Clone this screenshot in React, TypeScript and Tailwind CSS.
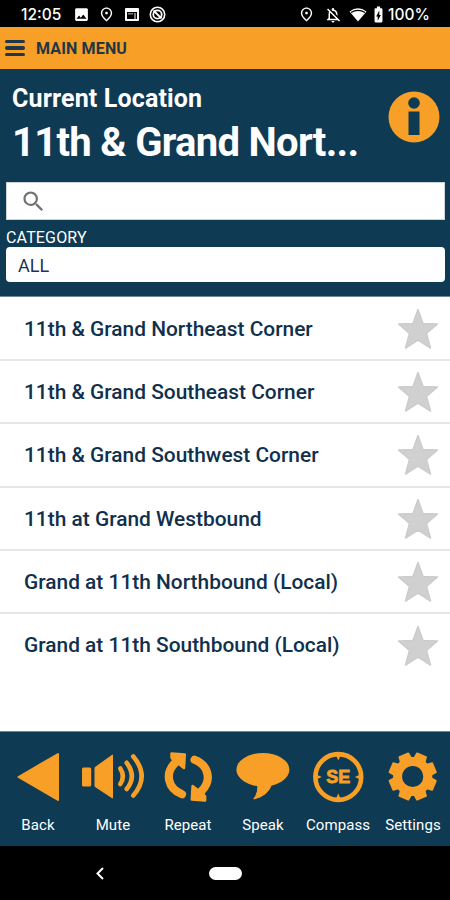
import React from 'react'
import { MdImage, MdOutlineNotificationsOff, MdOutlinePlace, MdBatteryChargingFull, MdSearch } from 'react-icons/md'

type Tab = {
  label: string
  icon: React.ReactNode
}

const stops = [
  '11th & Grand Northeast Corner',
  '11th & Grand Southeast Corner',
  '11th & Grand Southwest Corner',
  '11th at Grand Westbound',
  'Grand at 11th Northbound (Local)',
  'Grand at 11th Southbound (Local)',
]

const teeth = [22.5, 67.5, 112.5, 157.5, 202.5, 247.5, 292.5, 337.5]

const tabs: Tab[] = [
  {
    label: 'Back',
    icon: <path d="M18.5 29 58 6V52Z" fill="currentColor" stroke="currentColor" strokeWidth="2" strokeLinejoin="round" />,
  },
  {
    label: 'Mute',
    icon: (
      <>
        <rect x="7" y="19.5" width="9.2" height="19" rx="1.5" fill="currentColor" />
        <path d="M20 19.5 37.5 7V50L20 38.5Z" fill="currentColor" stroke="currentColor" strokeLinejoin="round" />
        <g fill="none" stroke="currentColor" strokeWidth="4.6" strokeLinecap="round">
          <path d="M45.3 20.5Q50.5 28.5 45.3 36" />
          <path d="M51.7 14.8Q62 28.5 51.7 41" />
          <path d="M58.3 8.5Q75 28.5 58.3 47.5" />
        </g>
      </>
    ),
  },
  {
    label: 'Repeat',
    icon: [0, 180].map((angle) => (
      <g key={angle} transform={`rotate(${angle} 38.3 29)`}>
        <path d="M32 46.2C17.5 40.500 14.500 25 25.500 14.500" fill="none" stroke="currentColor" strokeWidth="8.2" strokeLinecap="round" />
        <path d="M21.5 5.500 34.800 6.500 34 20 29.500 16.500 24.500 14 21.500 9.500Z" fill="currentColor" stroke="currentColor" strokeWidth="2.5" strokeLinejoin="round" />
      </g>
    )),
  },
  {
    label: 'Speak',
    icon: (
      <>
        <ellipse cx="37.9" cy="21.7" rx="26.5" ry="16.7" fill="currentColor" />
        <path d="M32.5 35.5Q34 44 28.8 51Q43 48 47 35.5Z" fill="currentColor" stroke="currentColor" strokeLinejoin="round" />
      </>
    ),
  },
  {
    label: 'Compass',
    icon: (
      <>
        <circle cx="38.3" cy="29" r="22.9" fill="none" stroke="currentColor" strokeWidth="4.6" />
        <path d="M36.3 8H40.3L38.3 12.500ZM36.3 50H40.3L38.3 45.500ZM17.3 27V31L21.800 29ZM59.3 27V31L54.800 29Z" fill="currentColor" />
        <text x="38.3" y="35.3" textAnchor="middle" fill="currentColor" stroke="currentColor" strokeWidth="0.8" className="font-['Liberation_Sans',sans-serif] text-[18px] font-bold">
          SE
        </text>
      </>
    ),
  },
  {
    label: 'Settings',
    icon: (
      <g transform="translate(37.7 28.5)">
        <circle r="15.1" fill="none" stroke="currentColor" strokeWidth="9" />
        {teeth.map((angle) => (
          <path key={angle} d="M-5.5 -17 -4.8 -23H4.8L5.5 -17Z" transform={`rotate(${angle})`} fill="currentColor" stroke="currentColor" strokeWidth="2" strokeLinejoin="round" />
        ))}
      </g>
    ),
  },
]

function StatusBar() {
  return (
    <div className="flex h-[27px] items-center bg-black pt-[2px] text-white">
      <span className="ml-[21px] w-[53px] font-['Inter',sans-serif] text-[15.5px] font-medium">12:05</span>
      <MdImage size={17} className="-ml-px" />
      <MdOutlinePlace size={17} className="ml-2" />
      <svg width="14" height="13" viewBox="0 0 14 13" className="ml-[10px]">
        <path fillRule="evenodd" fill="currentColor" d="M1 0H13Q14 0 14 1V12Q14 13 13 13H1Q0 13 0 12V1Q0 0 1 0ZM2 4V11H12V4Z" />
        <path fill="currentColor" opacity="0.5" d="M3 5H8V6.5H3ZM9 5H11V11H9Z" />
      </svg>
      <svg width="17" height="17" viewBox="0 0 17 17" fill="none" stroke="currentColor" className="ml-[10px]">
        <circle cx="8.5" cy="8.5" r="7.2" strokeWidth="1.6" />
        <circle cx="8.5" cy="8.5" r="4.2" strokeWidth="1.8" />
        <path d="M4.5 4.5 12.5 12.5" strokeWidth="1.8" />
      </svg>
      <MdOutlinePlace size={17} className="mr-[9px] ml-auto" />
      <MdOutlineNotificationsOff size={18} className="mr-[7px]" />
      <svg width="18" height="14" viewBox="0 0 18 14" className="mr-[2px]">
        <path d="M0.5 3.5Q9 -3 17.5 3.5L9 13.5Z" fill="currentColor" />
        <path d="M2 4.6Q9 0.2 16 4.6" fill="none" stroke="black" strokeWidth="1.2" />
      </svg>
      <MdBatteryChargingFull size={19} />
      <span className="mr-[19px] w-[43px] font-['Inter',sans-serif] text-[15.5px] font-medium">100%</span>
    </div>
  )
}

export default function App() {
  return (
    <div className="flex h-[900px] w-[450px] flex-col overflow-hidden bg-white font-['Roboto',sans-serif] text-[#11304c]">
      <StatusBar />
      <header className="flex h-[42px] items-center bg-[#f89f27] pl-[5px] text-[#203746]">
        <button aria-label="Open menu" className="flex w-5 flex-col gap-[3px]">
          <span className="h-[3.5px] rounded-full bg-current" />
          <span className="h-[3.5px] rounded-full bg-current" />
          <span className="h-[3.5px] rounded-full bg-current" />
        </button>
        <h1 className="ml-[11px] pt-px text-[16px] font-bold tracking-[0.15px]">MAIN MENU</h1>
      </header>

      <section className="flex h-[228px] flex-col border-b border-[#73879a] bg-[#0f3a54] pr-[5px] pl-[6px] text-white">
        <div className="flex h-[113px] justify-between">
          <div className="pt-[14px] pl-[6px]">
            <p className="text-[25px] leading-[32px] font-bold tracking-[0.15px]">Current Location</p>
            <h2 className="text-[40px] leading-[56px] font-bold tracking-[-0.7px] whitespace-nowrap">11th &amp; Grand Nort...</h2>
          </div>
          <svg width="52" height="52" viewBox="0 0 52 52" className="mt-[21.5px] mr-[5px] shrink-0">
            <circle cx="26" cy="26" r="25.5" fill="#f89f27" />
            <circle cx="26" cy="12" r="5.8" fill="#0f3a54" />
            <path d="M20.5 20.5H31.5V44H20.5Z" fill="#0f3a54" />
          </svg>
        </div>
        <div className="flex h-[38px] items-center border border-[#cdd3d8] bg-white pl-[13px] text-[#737373]">
          <MdSearch size={27} />
        </div>
        <label className="mt-[8px] text-[16px] leading-[19px] tracking-[0.15px]">CATEGORY</label>
        <div className="flex h-[35px] items-center rounded-[4px] bg-white pt-px pl-[12px] text-[18px] text-[#1d3553]">ALL</div>
      </section>

      <ul className="h-[434px] pt-[0.5px]">
        {stops.map((stop) => (
          <li key={stop} className="flex h-[63.4px] items-center justify-between border-b-2 border-[#e6e6e6] pr-[11px] pl-6 last:border-transparent">
            <span className="pt-[2px] text-[20.9px] font-medium whitespace-nowrap">{stop}</span>
            <svg width="42" height="42" viewBox="0 0 42 42" className="mt-px shrink-0">
              <path
                d="M21 1.5 26 15.5 40.5 16 29.5 25.5 33.5 40 21 32 8.5 40 12.5 25.5 1.5 16 16 15.5Z"
                fill="#d0d0d0"
                stroke="#cccccc"
                strokeWidth="1.5"
                strokeLinejoin="round"
              />
            </svg>
          </li>
        ))}
      </ul>

      <nav className="grid h-[115px] grid-cols-6 border-t border-[#73879a] bg-[#0f3a54]">
        {tabs.map((tab) => (
          <button key={tab.label} className="flex flex-col items-center pt-4 text-[#f89f27]">
            <svg width="75" height="58" viewBox="0 0 75 58">
              {tab.icon}
            </svg>
            <span className="mt-[9px] pl-px text-[15px] leading-[20px] tracking-[0.1px] text-white">{tab.label}</span>
          </button>
        ))}
      </nav>

      <footer className="flex h-[54px] items-center bg-black pl-[96px]">
        <svg width="8" height="13" viewBox="0 0 8 13" fill="none" stroke="white" strokeWidth="2">
          <path d="M7 1 1.5 6.5 7 12" />
        </svg>
        <div className="ml-[105px] h-[13px] w-[33px] rounded-full bg-white" />
      </footer>
    </div>
  )
}
